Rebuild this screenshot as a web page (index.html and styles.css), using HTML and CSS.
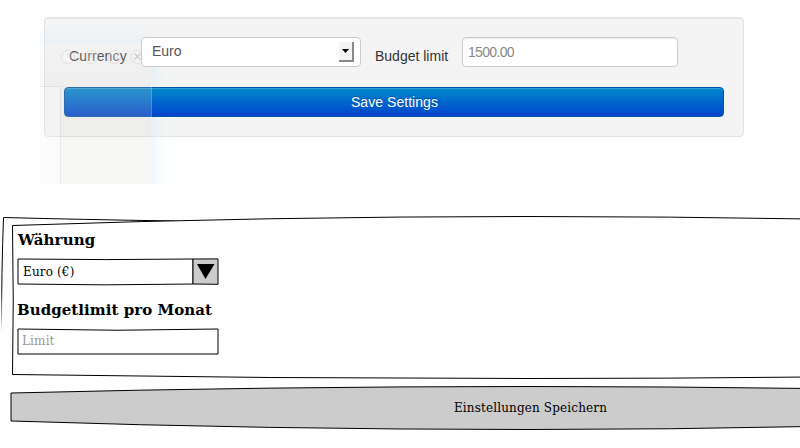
FILE: index.html
```html
<!DOCTYPE html>
<html lang="en">
<head>
<meta charset="utf-8">
<title>Settings</title>
<link rel="stylesheet" href="styles.css">
</head>
<body>
<section class="live">
  <form class="well">
    <div class="row">
      <label class="label currency-label">Currency</label>
      <div class="field select"><span>Euro</span>
        <span class="drop"><svg width="7" height="4" viewBox="0 0 7 4"><path d="M0 0H7L3.5 4Z"/></svg></span>
      </div>
      <label class="label limit-label">Budget limit</label>
      <div class="field limit">1500.00</div>
    </div>
    <button class="save" type="button">Save Settings</button>
  </form>
  <svg class="ghost" width="140" height="184" viewBox="40 0 140 184" aria-hidden="true">
    <defs>
      <linearGradient id="glow"><stop offset="0" stop-color="#c8eaff" stop-opacity=".36"/><stop offset=".4" stop-color="#e3f5ff" stop-opacity=".22"/><stop offset="1" stop-color="#fff" stop-opacity="0"/></linearGradient>
      <linearGradient id="top" x2="0" y2="1"><stop offset="0" stop-color="#d8f0ff" stop-opacity="0"/><stop offset="1" stop-color="#d8ecf7" stop-opacity=".32"/></linearGradient>
      <linearGradient id="sheet" x2="0" y2="1"><stop offset="0" stop-color="#eeedeb" stop-opacity=".2"/><stop offset="1" stop-color="#d9d8d5" stop-opacity=".2"/></linearGradient>
    </defs>
    <path fill="url(#top)" d="M40 22H152V45H40Z"/>
    <path fill="url(#glow)" d="M152 45H174V87H152ZM152 117H174V184H152Z"/>
    <path fill="url(#sheet)" d="M40 46H152V86H40Z"/>
    <path fill="#d2d2ce" fill-opacity=".2" d="M61 86H152V184H61Z"/>
    <path fill="#eee" fill-opacity=".2" d="M40 86H46V184H40Z"/>
    <path fill="#eee" fill-opacity=".25" d="M46 86H60V184H46Z"/>
    <path fill="none" stroke="#bbb" stroke-opacity=".3" d="M40 86.5H60.5V184"/>
    <path fill="none" stroke="#fff" stroke-opacity=".18" d="M40 46.5H151.5V184"/>
    <g fill="#fff" fill-opacity=".22" stroke="#999" stroke-opacity=".2"><circle cx="68" cy="57" r="6.5"/><circle cx="91.500" cy="57" r="6.5"/><circle cx="114.500" cy="57" r="6.5"/><circle cx="137.500" cy="57" r="6.5"/></g>
    <g fill="none" stroke="#888" stroke-opacity=".38" stroke-width="1.200"><path d="M134.500 53.500l6 6m0-6l-6 6"/><path stroke-opacity=".15" d="M66 54h3v3M89 58l3-3 3 3M112 56l3 3 3-3"/></g>
  </svg>
</section>

<section class="sketch">
  <svg class="frame" width="800" height="240" viewBox="0 208 800 240" aria-hidden="true">
    <defs><linearGradient id="fade" gradientUnits="userSpaceOnUse" x1="0" y1="217" x2="0" y2="332"><stop offset=".6" stop-color="#000"/><stop offset="1" stop-color="#000" stop-opacity="0"/></linearGradient></defs>
    <path class="line" d="M3.500 217.500Q80 219.500 175 221"/>
    <path fill="none" stroke="url(#fade)" d="M3.500 217.500Q1.500 270 1.500 332"/>
    <path class="paper" d="M12.500 225.500Q270 216.500 528 216.500Q670 216.500 810 219V377Q670 378.500 528 378.500Q270 378.500 12.500 374.500Q14 300 12.500 225.500Z"/>
    <path class="grey" d="M11 393Q270 386.500 528 386.500Q670 386.500 810 388.500V426.500Q670 429.500 528 429.500Q270 429.500 11 421Z"/>
  </svg>
  <div class="form">
    <h2 class="first">Währung</h2>
    <div class="box picker">
      <svg class="outline" width="202" height="28" viewBox="0 0 202 28" aria-hidden="true">
        <path class="line" d="M1 1Q88 2.200 176 1V26Q88 27.700 1 26Z"/>
        <path class="grey" d="M176 1L201 .9V26.300L176 26Z"/>
        <path d="M180 6H197.500L188.500 21Z"/>
      </svg>
      <span>Euro (€)</span>
    </div>
    <h2 class="second">Budgetlimit pro Monat</h2>
    <div class="box entry">
      <svg class="outline" width="202" height="28" viewBox="0 0 202 28" aria-hidden="true"><path class="line" d="M1 1Q101 3.500 201 1V26H1Z"/></svg>
      <span>Limit</span>
    </div>
  </div>
  <div class="submit"><span>Einstellungen Speichern</span></div>
</section>
</body>
</html>
```
FILE: styles.css
```css
* { box-sizing: border-box; }
body { margin: 0; background: #fff; overflow: hidden; }
.live { position: relative; height: 208px; padding: 17px 0 0 44px; font: 14px/20px "Liberation Sans", Arial, sans-serif; color: #333; }
.well { width: 700px; height: 120px; padding: 19px; background: #f4f4f4; border: 1px solid #e3e3e3; border-radius: 4px; box-shadow: inset 0 1px 1px rgba(0,0,0,.05); }
.row { display: flex; height: 50px; }
.label { padding-top: 9px; white-space: nowrap; }
.currency-label { width: 77px; padding-left: 5px; letter-spacing: .12px; }
.limit-label { width: 101px; padding-left: 14px; }
.field { height: 30px; background: #fff; border: 1px solid #ccc; border-radius: 4px; color: #555; }
.select { position: relative; z-index: 1; display: flex; justify-content: space-between; width: 220px; padding: 3px 6px 4px 10px; }
.drop { display: flex; align-items: center; justify-content: center; width: 15px; height: 20px; margin-top: 1px; background: #f5f4f2; border-right: 2px solid #888; border-bottom: 2px solid #888; }
.drop svg { display: block; }
.limit { width: 216px; padding: 4px 5px; color: #888; line-height: 20px; letter-spacing: -.68px; box-shadow: inset 0 1px 1px rgba(0,0,0,.075); }
.save { display: block; width: 660px; height: 30px; padding: 0 0 0 1px; border: 1px solid #0055a8; border-radius: 4px; background: linear-gradient(#08c, #04c); box-shadow: inset 0 1px 0 rgba(255,255,255,.2); color: #fff; font: inherit; letter-spacing: .05px; text-shadow: 0 -1px 0 rgba(0,0,0,.25); }
.ghost { position: absolute; left: 40px; top: 0; pointer-events: none; }
.sketch { position: relative; height: 240px; color: #000; font: 12px/16px "DejaVu Serif", serif; letter-spacing: .15px; }
.frame { position: absolute; left: 0; top: 0; z-index: -1; }
.line { fill: none; stroke: #000; stroke-width: 1; }
.paper { fill: #fff; stroke: #000; }
.grey { fill: #ccc; stroke: #000; }
.form { height: 180px; padding: 22px 0 0 17px; }
h2 { margin: 0; font-size: 15px; line-height: 20px; font-weight: bold; }
.first { padding-left: 1px; letter-spacing: .15px; }
.second { margin-top: 14px; letter-spacing: .05px; }
.box { position: relative; width: 202px; height: 28px; margin-top: 8px; padding: 6px 0 0 6px; }
.outline { position: absolute; left: 0; top: 0; z-index: -1; }
.entry { padding: 5px 0 0 5px; color: #999; }
.submit { display: flex; justify-content: center; padding: 12px 0 0 261px; }
```
